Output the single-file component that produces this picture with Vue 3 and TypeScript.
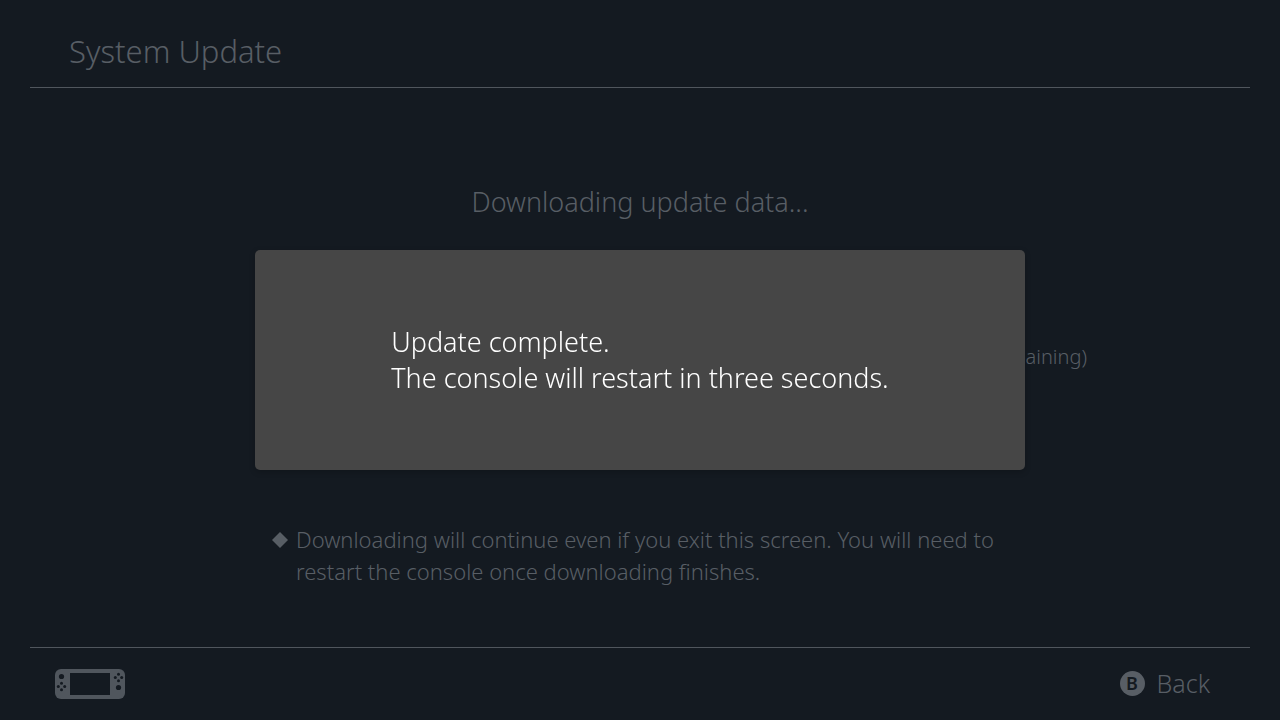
<script setup lang="ts">
const title: string = 'System Update'
const status: string = 'Downloading update data...'
const messageLines: string[] = ['Update complete.', 'The console will restart in three seconds.']
</script>

<template>
  <div class="screen">
    <header class="header">
      <h1>{{ title }}</h1>
    </header>

    <main class="content">
      <p class="status">{{ status }}</p>
      <p class="remaining">remaining)</p>
      <div class="note">
        <svg class="diamond" width="18" height="18" viewBox="0 0 18 18" aria-hidden="true">
          <path d="M9 1 17 9 9 17 1 9Z" fill="currentColor" />
        </svg>
        <p>Downloading will continue even if you exit this screen. You will need to restart the console once downloading finishes.</p>
      </div>
    </main>

    <footer class="footer">
      <svg class="console" width="70" height="30" viewBox="0 0 70 30" role="img" aria-label="Console">
        <rect width="70" height="30" rx="6" fill="#50565d" />
        <g fill="#141a21">
          <rect x="15" y="4" width="40" height="22" />
          <circle cx="6.5" cy="7.5" r="2.6" />
          <circle cx="6.5" cy="14.3" r="1.5" />
          <circle cx="6.5" cy="20.7" r="1.5" />
          <circle cx="3.3" cy="17.5" r="1.5" />
          <circle cx="9.7" cy="17.5" r="1.5" />
          <circle cx="63.5" cy="5.3" r="1.5" />
          <circle cx="63.5" cy="11.7" r="1.5" />
          <circle cx="60.3" cy="8.5" r="1.5" />
          <circle cx="66.7" cy="8.5" r="1.5" />
          <circle cx="63.5" cy="18.5" r="2.6" />
        </g>
      </svg>
      <button class="back" type="button">
        <span class="key">B</span>
        <span>Back</span>
      </button>
    </footer>

    <div class="overlay">
      <div class="dialog" role="alertdialog" aria-label="Update complete">
        <div>
          <p v-for="line in messageLines" :key="line">{{ line }}</p>
        </div>
      </div>
    </div>
  </div>
</template>

<style>
body {
  background: #141a21;
}
</style>

<style scoped>
.screen {
  box-sizing: border-box;
  min-height: 100vh;
  padding: 0 30px;
  display: flex;
  flex-direction: column;
  background: #141a21;
  color: #585e65;
  font-family: "Noto Sans", "Open Sans", sans-serif;
  font-weight: 300;
}
h1,
p {
  margin: 0;
  font-weight: inherit;
}
.header {
  box-sizing: border-box;
  height: 88px;
  padding: 16px 39px 0;
  border-bottom: 1px solid #50565d;
}
h1 {
  font-size: 31px;
  line-height: 70px;
}
.content {
  flex: 1;
  display: flex;
  flex-direction: column;
  align-items: center;
}
.status {
  margin-top: 96px;
  font-size: 27px;
  line-height: 36px;
}
.remaining {
  align-self: flex-end;
  margin: 123px 163px 0 0;
  font-size: 20px;
  line-height: 28px;
}
.note {
  display: flex;
  gap: 7px;
  width: 738px;
  margin-top: 152px;
  font-size: 22px;
  line-height: 32px;
}
.note p {
  flex: 1;
}
.diamond {
  flex: none;
  margin-top: 8px;
}
.footer {
  box-sizing: border-box;
  height: 73px;
  padding: 0 40px 0 25px;
  border-top: 1px solid #50565d;
  display: flex;
  align-items: center;
  justify-content: space-between;
}
.back {
  display: flex;
  align-items: center;
  gap: 12px;
  padding: 0 0 2px;
  border: 0;
  background: none;
  color: inherit;
  font: inherit;
  font-size: 25px;
  line-height: 36px;
}
.key {
  width: 25px;
  height: 25px;
  border-radius: 50%;
  background: #585e65;
  color: #141a21;
  font-size: 18px;
  font-weight: 600;
  line-height: 25px;
  text-align: center;
}
.overlay {
  position: fixed;
  inset: 0;
  display: flex;
  align-items: center;
  justify-content: center;
}
.dialog {
  width: 770px;
  min-height: 220px;
  display: flex;
  align-items: center;
  justify-content: center;
  border-radius: 5px;
  background: #464646;
  color: #fff;
  font-size: 27px;
  line-height: 36px;
  box-shadow: 0 2px 6px rgba(0, 0, 0, 0.2);
}
</style>
